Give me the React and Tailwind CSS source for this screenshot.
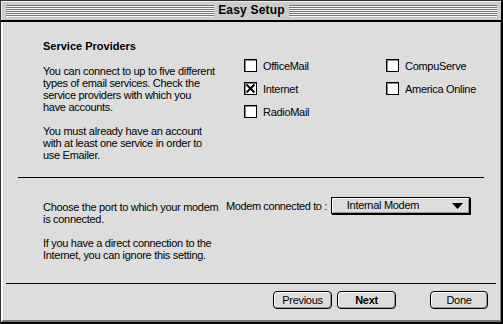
import React from 'react';

const font = "font-['Liberation_Sans',Arial,sans-serif]";

function Stripes() {
  return (
    <div className="flex-1 flex flex-col">
      {[0, 1, 2, 3, 4, 5].map(i => (
        <div key={i}>
          <div className="h-[1px] bg-[#777777]" />
          <div className="h-[1px] bg-[#f4f4f4]" />
        </div>
      ))}
    </div>
  );
}

function Checkbox({ label, checked }) {
  return (
    <div className="flex items-center gap-[6px] h-[13px]">
      <div className="w-[13px] h-[13px] border border-black bg-white shadow-[inset_1px_1px_0_#888] flex items-center justify-center">
        {checked && (
          <svg width="11" height="11" viewBox="0 0 11 11">
            <path d="M1.5 1.5 L9.5 9.5 M9.5 1.5 L1.5 9.5" stroke="#000" strokeWidth="2" />
          </svg>
        )}
      </div>
      <span className="leading-[12px] whitespace-nowrap">{label}</span>
    </div>
  );
}

function Button({ children, bold, w }) {
  return (
    <button className={`${w} h-[18px] rounded-[4px] border border-black bg-[#dddddd] shadow-[inset_1px_1px_0_#ffffff,inset_-1px_-1px_0_#999999] text-[11px] leading-none ${bold ? 'font-bold' : ''}`}>
      {children}
    </button>
  );
}

export default function App() {
  return (
    <div className={`${font} w-[503px] h-[324px] bg-[#cccccc] text-black text-[11px] tracking-[-0.3px] flex flex-col border-t border-l border-t-[#333333] border-l-[#333333] border-r-2 border-b-2 border-r-black border-b-black overflow-hidden`}>
      {/* title bar */}
      <div className="h-[21px] shrink-0 border-b-2 border-black flex items-start pt-[4px] pl-[5px] pr-[4px] shadow-[inset_1px_1px_0_#eeeeee]">
        <Stripes />
        <div className="px-[4px] -mt-[3px] text-[12px] font-bold leading-[16px] tracking-[0.2px]">Easy Setup</div>
        <Stripes />
      </div>

      <div className="flex-1 bg-[#dddddd] border-l-2 border-l-white border-r border-r-[#888888] border-b-2 border-b-[#777777] flex flex-col">
        {/* service providers */}
        <div className="flex items-start pt-[18px]">
          <div className="ml-[40px] w-[201px] leading-[12px] whitespace-nowrap">
            <div className="font-bold tracking-normal">Service Providers</div>
            <p className="mt-[13px]">
              You can connect to up to five different<br />
              types of email services. Check the<br />
              service providers with which you<br />
              have accounts.
            </p>
            <p className="mt-[12px]">
              You must already have an account<br />
              with at least one service in order to<br />
              use Emailer.
            </p>
          </div>
          <div className="mt-[19px] grid grid-cols-[142px_auto] content-start gap-y-[10px]">
            <Checkbox label="OfficeMail" />
            <Checkbox label="CompuServe" />
            <Checkbox label="Internet" checked />
            <Checkbox label="America Online" />
            <Checkbox label="RadioMail" />
          </div>
        </div>

        <div className="mt-[16px] ml-[15px] w-[466px] h-[1px] bg-black" />

        {/* modem */}
        <div className="flex items-start">
          <div className="ml-[40px] w-[183px] mt-[23px] leading-[12px] whitespace-nowrap">
            <p>
              Choose the port to which your modem<br />
              is connected.
            </p>
            <p className="mt-[12px]">
              If you have a direct connection to the<br />
              Internet, you can ignore this setting.
            </p>
          </div>
          <div className="mt-[19px] flex items-center gap-[4px]">
            <span className="shrink-0 whitespace-nowrap leading-[12px] tracking-[-0.4px]">Modem connected to :</span>
            <div className="w-[139px] h-[17px] border border-black bg-[#dddddd] shadow-[inset_1px_1px_0_#ffffff,inset_-1px_-1px_0_#999999,1px_1px_0_#000000] flex items-center pl-[15px] pr-[6px]">
              <span className="flex-1 leading-none whitespace-nowrap">Internal Modem</span>
              <svg width="11" height="6" viewBox="0 0 11 6">
                <polygon points="0,0 11,0 5.5,6" fill="#000" />
              </svg>
            </div>
          </div>
        </div>

        <div className="mt-[22px] ml-[3px] w-[490px] h-[1px] bg-black" />

        <div className="flex justify-end items-center mt-[7px] mr-[12px]">
          <Button w="w-[59px]">Previous</Button>
          <div className="w-[5px]" />
          <Button w="w-[59px]" bold>Next</Button>
          <div className="w-[34px]" />
          <Button w="w-[58px]">Done</Button>
        </div>
      </div>
    </div>
  );
}
